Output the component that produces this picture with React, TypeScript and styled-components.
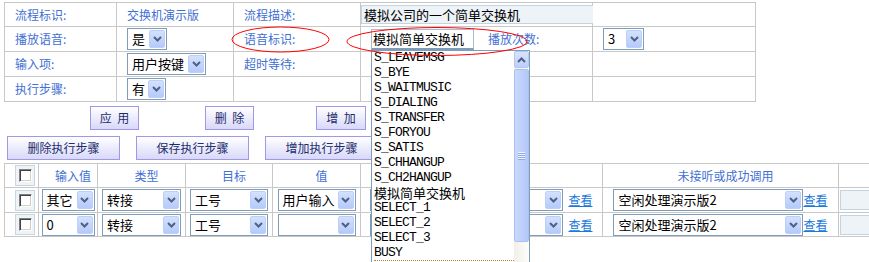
import React from "react";
import styled, { createGlobalStyle } from "styled-components";

const GlobalStyle = createGlobalStyle`
  html, body { margin: 0; padding: 0; background: #ffffff; }
  body {
    font-family: "Noto Sans CJK SC", "Liberation Sans", sans-serif;
    font-size: 12px;
    color: #000;
  }
`;

const LINE = "#c8c8c8";

const Page = styled.div`
  position: relative;
  width: 869px;
  height: 262px;
  box-sizing: border-box;
  padding: 2px 0 0 4px;
  overflow: hidden;
`;

const InfoGrid = styled.div`
  display: grid;
  grid-template-columns: 111px 116px 126px 231px 162px;
  grid-template-rows: 23px 24px 24px 24px;
  gap: 1px;
  width: max-content;
  background: ${LINE};
  border: 1px solid ${LINE};
`;

const InfoCell = styled.div<{ $pad?: number }>`
  background: #fff;
  display: flex;
  align-items: center;
  padding-left: ${(p) => p.$pad ?? 10}px;
  min-width: 0;
`;

const Label = styled.span<{ $ml?: number }>`
  color: #3f70d4;
  font-size: 12px;
  line-height: 14px;
  white-space: nowrap;
  margin-left: ${(p) => p.$ml ?? 0}px;
`;

const TextInput = styled.div<{ $w: number; $h: number }>`
  box-sizing: border-box;
  width: ${(p) => p.$w}px;
  height: ${(p) => p.$h}px;
  border: 1px solid #c3d3df;
  background: #eef3f7;
  font-size: 13px;
  line-height: ${(p) => p.$h - 2}px;
  padding-left: 2px;
  white-space: nowrap;
  overflow: hidden;
  flex-shrink: 0;
`;

const SelectFrame = styled.div<{ $w: number }>`
  box-sizing: border-box;
  width: ${(p) => p.$w}px;
  height: 22px;
  border: 1px solid #7f9db9;
  background: #fff;
  display: flex;
  align-items: center;
  padding: 1px;
  flex-shrink: 0;
`;

const SelectValue = styled.span`
  flex: 1;
  min-width: 0;
  padding-left: 3px;
  font-size: 13px;
  line-height: 18px;
  white-space: nowrap;
  overflow: hidden;
`;

const DropButton = styled.span`
  box-sizing: border-box;
  width: 16px;
  height: 18px;
  border: 1px solid #bccff8;
  border-radius: 2px;
  background: linear-gradient(#d4e1fd, #b5cafa);
  display: flex;
  align-items: center;
  justify-content: center;
  flex-shrink: 0;
`;

const OpenSelectBox = styled.div`
  box-sizing: border-box;
  width: 103px;
  height: 21px;
  border: 1px solid #a9bccd;
  border-bottom: 2px solid #7f9db9;
  background: #fff;
  font-size: 13px;
  line-height: 18px;
  padding-left: 1px;
  white-space: nowrap;
  flex-shrink: 0;
`;

const ButtonRowTop = styled.div`
  display: grid;
  grid-template-columns: 115px 111px 50px;
  padding-left: 86px;
  margin-top: 4px;
`;

const ButtonRowSteps = styled.div`
  display: flex;
  gap: 16px;
  padding-left: 3px;
  margin-top: 6px;
`;

const ActionButton = styled.button<{ $w: number }>`
  box-sizing: border-box;
  width: ${(p) => p.$w}px;
  height: 24px;
  border: 1px solid #a098e2;
  background: linear-gradient(#ffffff, #d8d8fa);
  color: #1d2c6c;
  font-family: "Noto Sans CJK SC", sans-serif;
  font-size: 12px;
  line-height: 14px;
  padding: 0;
  white-space: pre;
  flex-shrink: 0;
`;

const StepGrid = styled.div`
  display: grid;
  grid-template-columns: 33px 58px 87px 86px 87px 241px 235px 150px;
  grid-template-rows: 23px 24px 23px;
  gap: 1px;
  width: max-content;
  background: ${LINE};
  border: 1px solid ${LINE};
  margin-top: 3px;
`;

const StepCell = styled.div<{ $start?: boolean; $pad?: number }>`
  background: #fff;
  display: flex;
  align-items: center;
  justify-content: ${(p) => (p.$start ? "flex-start" : "center")};
  padding-left: ${(p) => p.$pad ?? 0}px;
  min-width: 0;
`;

const CheckFrame = styled.span`
  box-sizing: border-box;
  width: 20px;
  height: 21px;
  border: 1px solid #c7d7e2;
  background: #eef3f7;
  display: flex;
  align-items: center;
  justify-content: center;
`;

const CheckBox = styled.span`
  box-sizing: border-box;
  width: 13px;
  height: 13px;
  background: #fff;
  border-style: solid;
  border-width: 1px;
  border-color: #808080 #ffffff #ffffff #808080;
  box-shadow: inset 1px 1px 0 #404040, inset -1px -1px 0 #d4d0c8;
`;

const ViewLink = styled.a<{ $gap?: number }>`
  color: #1b78dc;
  text-decoration: underline;
  font-size: 12px;
  line-height: 14px;
  margin-left: ${(p) => p.$gap ?? 0}px;
  white-space: nowrap;
  cursor: pointer;
`;

const DropList = styled.div`
  position: absolute;
  left: 371px;
  top: 50px;
  width: 159px;
  height: 220px;
  box-sizing: border-box;
  border: 1px solid #7f9db9;
  background: #fff;
  overflow: hidden;
  z-index: 5;
  display: flex;
`;

const OptionList = styled.div`
  flex: 1;
  padding-left: 2px;
  min-width: 0;
  margin-top: -1px;
`;

const OptionItem = styled.div<{ $cjk?: boolean; $focus?: boolean }>`
  box-sizing: border-box;
  height: 15px;
  line-height: 15px;
  white-space: nowrap;
  font-family: ${(p) =>
    p.$cjk ? '"Noto Sans CJK SC", sans-serif' : '"Liberation Mono", monospace'};
  font-size: 13px;
  letter-spacing: ${(p) => (p.$cjk ? "0" : "-0.8px")};
  color: #000;
  ${(p) => (p.$focus ? "border-top: 1px dotted #c0803a;" : "")}
`;

const ScrollBar = styled.div`
  width: 15px;
  display: flex;
  flex-direction: column;
  background: linear-gradient(to right, #f1efe8, #fdfdfa);
  flex-shrink: 0;
`;

const ScrollUp = styled.div`
  box-sizing: border-box;
  height: 17px;
  border: 1px solid #b4c8f4;
  border-radius: 2px;
  background: linear-gradient(#d8e3fe, #bccffb);
  display: flex;
  align-items: center;
  justify-content: center;
`;

const ScrollThumb = styled.div`
  box-sizing: border-box;
  height: 173px;
  margin-top: 1px;
  border: 1px solid #a9c0f1;
  border-radius: 2px;
  background: linear-gradient(to right, #c9d8fd, #bccefb 60%, #b3c8f8);
  display: flex;
  align-items: center;
  justify-content: center;
`;

const Annotation = styled.svg`
  position: absolute;
  left: 0;
  top: 0;
  pointer-events: none;
  z-index: 10;
`;

const Chevron = ({ up }: { up?: boolean }) => (
  <svg width="9" height="6" viewBox="0 0 9 6">
    <path
      d={up ? "M1 5 L4.5 1.5 L8 5" : "M1 1 L4.5 4.5 L8 1"}
      fill="none"
      stroke="#4d6185"
      strokeWidth="2"
    />
  </svg>
);

const Grip = () => (
  <svg width="7" height="8" viewBox="0 0 7 8">
    {[0, 2, 4, 6].map((y) => (
      <g key={y}>
        <rect x="0" y={y} width="7" height="1" fill="#eef3ff" />
        <rect x="0" y={y + 1} width="7" height="1" fill="#8fa8e6" />
      </g>
    ))}
  </svg>
);

const Select = ({ w, value }: { w: number; value: string }) => (
  <SelectFrame $w={w}>
    <SelectValue>{value}</SelectValue>
    <DropButton>
      <Chevron />
    </DropButton>
  </SelectFrame>
);

const options = [
  "S_LEAVEMSG",
  "S_BYE",
  "S_WAITMUSIC",
  "S_DIALING",
  "S_TRANSFER",
  "S_FORYOU",
  "S_SATIS",
  "S_CHHANGUP",
  "S_CH2HANGUP",
  "模拟简单交换机",
  "SELECT_1",
  "SELECT_2",
  "SELECT_3",
  "BUSY",
];

const stepRows = [
  { input: "其它", type: "转接", target: "工号", value: "用户输入" },
  { input: "0", type: "转接", target: "工号", value: "" },
];

export default function App() {
  return (
    <>
      <GlobalStyle />
      <Page>
        <InfoGrid>
          <InfoCell><Label>流程标识:</Label></InfoCell>
          <InfoCell><Label>交换机演示版</Label></InfoCell>
          <InfoCell><Label>流程描述:</Label></InfoCell>
          <InfoCell $pad={0}>
            <TextInput $w={339} $h={19}>模拟公司的一个简单交换机</TextInput>
          </InfoCell>
          <InfoCell />

          <InfoCell><Label>播放语音:</Label></InfoCell>
          <InfoCell><Select w={40} value="是" /></InfoCell>
          <InfoCell><Label>语音标识:</Label></InfoCell>
          <InfoCell>
            <OpenSelectBox>模拟简单交换机</OpenSelectBox>
            <Label $ml={14}>播放次数:</Label>
          </InfoCell>
          <InfoCell><Select w={41} value="3" /></InfoCell>

          <InfoCell><Label>输入项:</Label></InfoCell>
          <InfoCell><Select w={79} value="用户按键" /></InfoCell>
          <InfoCell><Label>超时等待:</Label></InfoCell>
          <InfoCell />
          <InfoCell />

          <InfoCell><Label>执行步骤:</Label></InfoCell>
          <InfoCell><Select w={39} value="有" /></InfoCell>
          <InfoCell />
          <InfoCell />
          <InfoCell />
        </InfoGrid>

        <ButtonRowTop>
          <ActionButton $w={49}>{"应  用"}</ActionButton>
          <ActionButton $w={49}>{"删  除"}</ActionButton>
          <ActionButton $w={50}>{"增  加"}</ActionButton>
        </ButtonRowTop>

        <ButtonRowSteps>
          <ActionButton $w={113}>删除执行步骤</ActionButton>
          <ActionButton $w={113}>保存执行步骤</ActionButton>
          <ActionButton $w={113}>增加执行步骤</ActionButton>
        </ButtonRowSteps>

        <StepGrid>
          <StepCell $start $pad={10}>
            <CheckFrame><CheckBox /></CheckFrame>
          </StepCell>
          <StepCell $pad={10}><Label>输入值</Label></StepCell>
          <StepCell $pad={10}><Label>类型</Label></StepCell>
          <StepCell $pad={10}><Label>目标</Label></StepCell>
          <StepCell $pad={10}><Label>值</Label></StepCell>
          <StepCell $pad={10}><Label>成功调用</Label></StepCell>
          <StepCell $pad={10}><Label>未接听或成功调用</Label></StepCell>
          <StepCell />

          {stepRows.map((r, i) => (
            <React.Fragment key={i}>
              <StepCell $start $pad={10}>
                <CheckFrame><CheckBox /></CheckFrame>
              </StepCell>
              <StepCell><Select w={53} value={r.input} /></StepCell>
              <StepCell><Select w={79} value={r.type} /></StepCell>
              <StepCell><Select w={78} value={r.target} /></StepCell>
              <StepCell><Select w={78} value={r.value} /></StepCell>
              <StepCell>
                <Select w={193} value="空闲处理演示版" />
                <ViewLink $gap={5}>查看</ViewLink>
              </StepCell>
              <StepCell>
                <Select w={190} value="空闲处理演示版2" />
                <ViewLink>查看</ViewLink>
              </StepCell>
              <StepCell $start $pad={1}>
                <TextInput $w={140} $h={20} />
              </StepCell>
            </React.Fragment>
          ))}
        </StepGrid>

        <DropList>
          <OptionList>
            {options.map((o) => (
              <OptionItem key={o} $cjk={/[^\x00-\x7f]/.test(o)}>
                {o}
              </OptionItem>
            ))}
            <OptionItem $focus />
          </OptionList>
          <ScrollBar>
            <ScrollUp>
              <Chevron up />
            </ScrollUp>
            <ScrollThumb>
              <Grip />
            </ScrollThumb>
          </ScrollBar>
        </DropList>

        <Annotation width="869" height="262" viewBox="0 0 869 262">
          <ellipse cx="280.5" cy="39.5" rx="48.5" ry="12.5" fill="none" stroke="#ff0000" strokeWidth="1" />
          <ellipse cx="437" cy="41.5" rx="90" ry="14" fill="none" stroke="#ff0000" strokeWidth="1" />
        </Annotation>
      </Page>
    </>
  );
}
